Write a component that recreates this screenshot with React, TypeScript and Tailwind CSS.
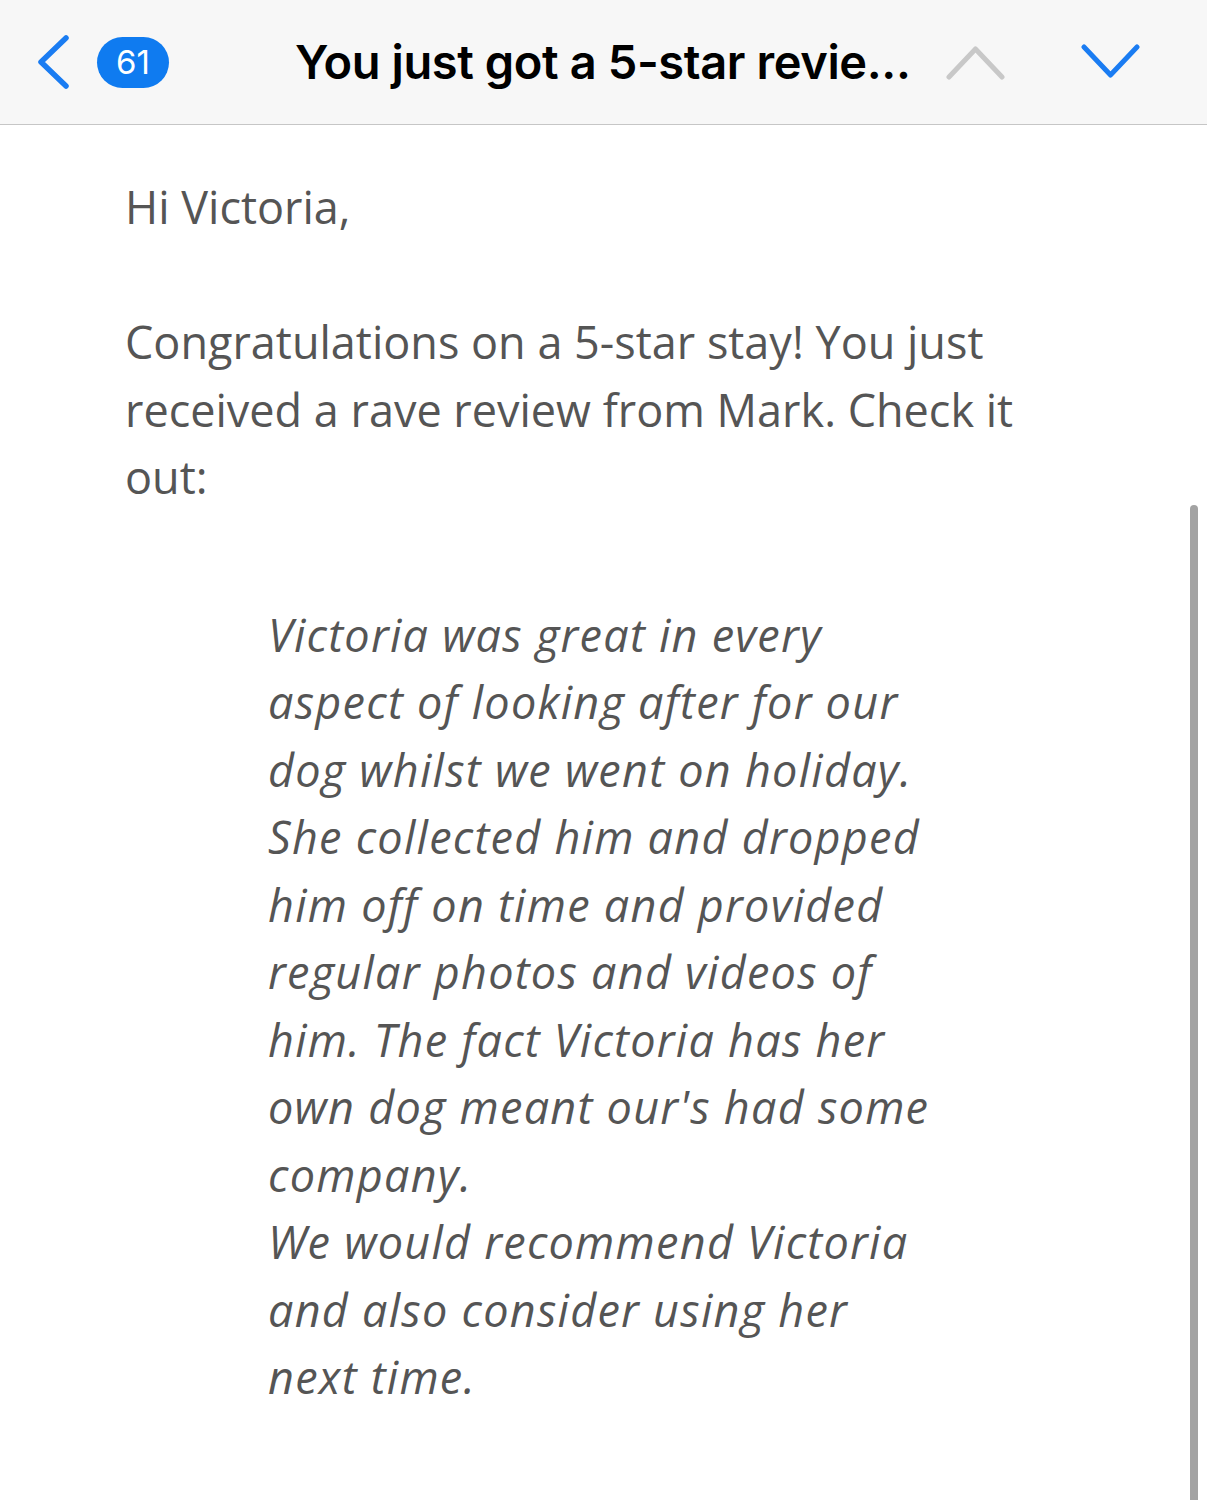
import React from "react";

const quoteLines = [
  "Victoria was great in every",
  "aspect of looking after for our",
  "dog whilst we went on holiday.",
  "She collected him and dropped",
  "him off on time and provided",
  "regular photos and videos of",
  "him. The fact Victoria has her",
  "own dog meant our's had some",
  "company.",
  "We would recommend Victoria",
  "and also consider using her",
  "next time.",
];

export default function App() {
  return (
    <div className="w-[1207px] h-[1500px] overflow-hidden bg-white relative">
      <header className="h-[125px] bg-[#f7f7f7] border-b border-[#c6c6c6] flex items-center">
        <div className="w-[36px]" />
        <svg width="34" height="56" viewBox="0 0 34 56" className="shrink-0">
          <path d="M30 4 L5 28 L30 52" fill="none" stroke="#1a7cf2" strokeWidth="5.5" strokeLinecap="round" strokeLinejoin="round" />
        </svg>
        <div className="ml-[27px] h-[51px] w-[72px] rounded-full bg-[#0f7bf0] flex items-center justify-center text-white text-[33px] font-['Inter',sans-serif] leading-none">
          61
        </div>
        <div className="ml-[126px] text-[47px] font-semibold text-black font-['Inter',sans-serif] tracking-[-0.4px] whitespace-nowrap">
          You just got a 5-star revie...
        </div>
        <svg width="59" height="38" viewBox="0 0 59 38" className="ml-[36px] shrink-0">
          <path d="M3 34 L29.5 6 L56 34" fill="none" stroke="#c8c8c8" strokeWidth="5" strokeLinecap="round" strokeLinejoin="round" />
        </svg>
        <svg width="59" height="40" viewBox="0 0 59 40" className="ml-[76px] shrink-0">
          <path d="M3 5 L29.5 33 L56 5" fill="none" stroke="#1a7cf2" strokeWidth="5" strokeLinecap="round" strokeLinejoin="round" />
        </svg>
      </header>
      <main className="pl-[125px] pt-[48px] font-['Open_Sans',sans-serif] font-stretch-normal text-[#555555] text-[45px] leading-[67.5px]">
        <p>Hi Victoria,</p>
        <p className="mt-[67.5px]">
          Congratulations on a 5-star stay! You just
          <br />
          received a rave review from Mark. Check it
          <br />
          out:
        </p>
        <blockquote className="mt-[90px] ml-[143px] italic tracking-[1.25px]">
          {quoteLines.map((l, i) => (
            <div key={i} className="whitespace-nowrap">{l}</div>
          ))}
        </blockquote>
      </main>
      <div className="absolute left-[1190px] top-[505px] w-[8px] h-[1000px] rounded-t-full bg-[#a3a3a3]" />
    </div>
  );
}
